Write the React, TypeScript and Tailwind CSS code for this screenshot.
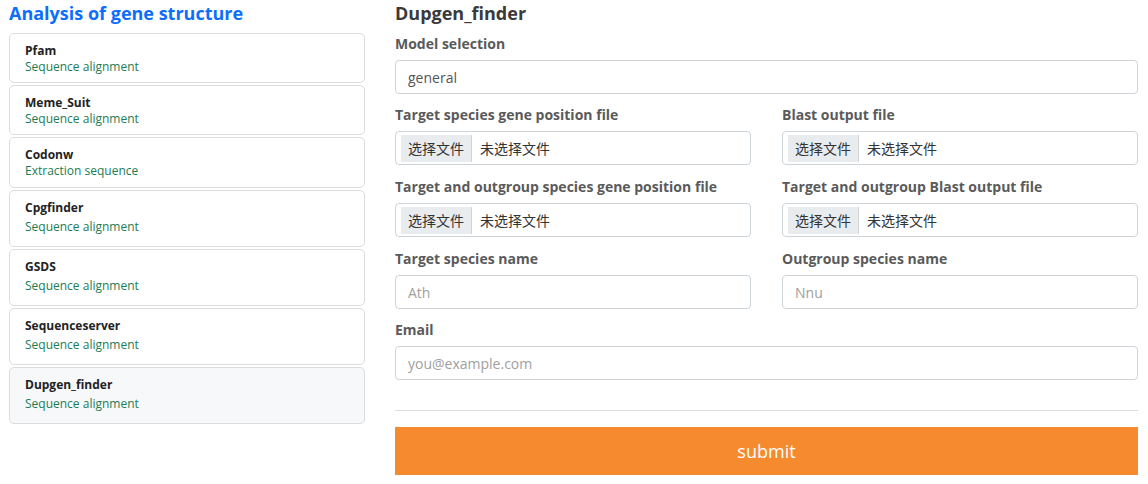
import React from "react";

const font = { fontFamily: '"Open Sans", "Noto Sans CJK SC", sans-serif' };

type Item = { name: string; sub: string; tall?: boolean; active?: boolean; h: string };

const items: Item[] = [
  { name: "Pfam", sub: "Sequence alignment", h: "h-[50px]" },
  { name: "Meme_Suit", sub: "Sequence alignment", h: "h-[50px]" },
  { name: "Codonw", sub: "Extraction sequence", h: "h-[51px]" },
  { name: "Cpgfinder", sub: "Sequence alignment", tall: true, h: "h-[57px]" },
  { name: "GSDS", sub: "Sequence alignment", tall: true, h: "h-[57px]" },
  { name: "Sequenceserver", sub: "Sequence alignment", tall: true, h: "h-[57px]" },
  { name: "Dupgen_finder", sub: "Sequence alignment", tall: true, active: true, h: "h-[57px]" },
];

function Label({ children }: { children: React.ReactNode }) {
  return <div className="text-[14px] leading-[20px] font-bold text-[#5a5a5a] mb-[6px]">{children}</div>;
}

function FileInput() {
  return (
    <div className="h-[34px] border border-[#ced4da] rounded-[4px] flex items-center pl-[5px] bg-white">
      <div
        className="h-[27px] px-[7px] bg-[#e9ecef] border-r border-[#d0d4d8] flex items-center text-[14px] text-[#333]"
        style={{ fontFamily: '"Noto Sans CJK SC", sans-serif' }}
      >
        选择文件
      </div>
      <div className="ml-[8px] text-[14px] text-[#333]" style={{ fontFamily: '"Noto Sans CJK SC", sans-serif' }}>
        未选择文件
      </div>
    </div>
  );
}

function TextInput({ value, placeholder }: { value?: string; placeholder?: string }) {
  return (
    <div className="h-[34px] border border-[#ced4da] rounded-[4px] flex items-center px-[12px] bg-white text-[14px]">
      {value ? <span className="text-[#555]">{value}</span> : <span className="text-[#a0a0a0]">{placeholder}</span>}
    </div>
  );
}

export default function App() {
  return (
    <div className="w-[1148px] h-[484px] bg-white flex" style={font}>
      <div className="w-[356px] ml-[9px] flex flex-col">
        <div className="h-[26px] leading-[26px] text-[18px] font-bold text-[#0d6efd] mb-[7px]">
          Analysis of gene structure
        </div>
        <div className="flex flex-col gap-[2px]">
          {items.map((it) => (
            <div
              key={it.name}
              className={`${it.h} border border-[#dcdcdc] rounded-[5px] px-[15px] pt-[9px] ${
                it.active ? "bg-[#f7f8fa]" : "bg-white"
              }`}
            >
              <div className="text-[12px] leading-[16px] font-bold text-[#222]">{it.name}</div>
              <div className={`text-[12px] leading-[16px] text-[#1c7c54] ${it.tall ? "mt-[3px]" : ""}`}>{it.sub}</div>
            </div>
          ))}
        </div>
      </div>
      <div className="ml-[30px] w-[743px] flex flex-col">
        <div className="h-[26px] leading-[26px] text-[18px] font-bold text-[#3a3a3a] mb-[8px]">Dupgen_finder</div>
        <Label>Model selection</Label>
        <TextInput value="general" />
        <div className="grid grid-cols-2 gap-x-[31px] mt-[11px] gap-y-[12px]">
          <div>
            <Label>Target species gene position file</Label>
            <FileInput />
          </div>
          <div>
            <Label>Blast output file</Label>
            <FileInput />
          </div>
          <div>
            <Label>Target and outgroup species gene position file</Label>
            <FileInput />
          </div>
          <div>
            <Label>Target and outgroup Blast output file</Label>
            <FileInput />
          </div>
          <div>
            <Label>Target species name</Label>
            <TextInput placeholder="Ath" />
          </div>
          <div>
            <Label>Outgroup species name</Label>
            <TextInput placeholder="Nnu" />
          </div>
        </div>
        <div className="mt-[11px]">
          <Label>Email</Label>
          <TextInput placeholder="you@example.com" />
        </div>
        <div className="mt-[30px] h-px bg-[#dddddd]" />
        <button className="mt-[16px] h-[48px] bg-[#f58a2e] text-white text-[18px] w-full">submit</button>
      </div>
    </div>
  );
}
